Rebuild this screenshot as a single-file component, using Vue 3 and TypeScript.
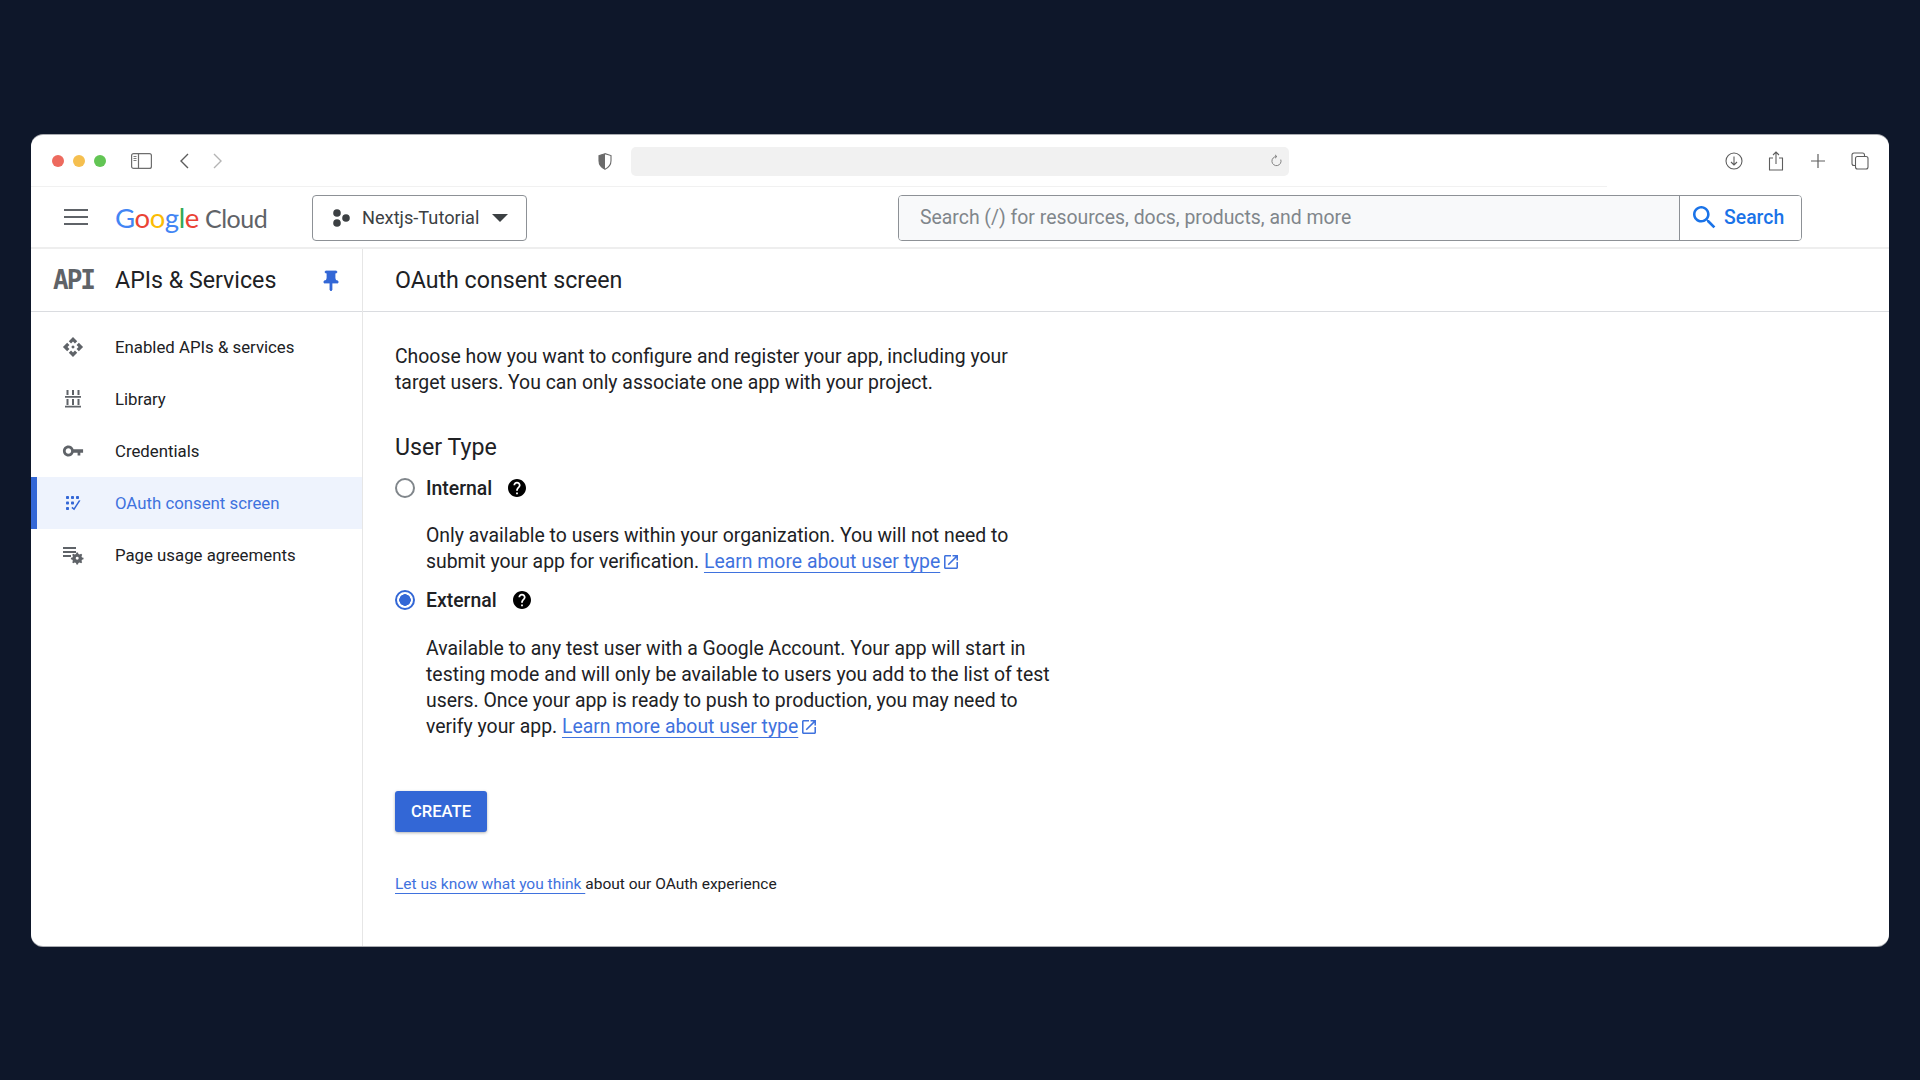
<script setup lang="ts">
const helpPath = "M12 2C6.48 2 2 6.48 2 12s4.48 10 10 10 10-4.48 10-10S17.52 2 12 2zm1 17h-2v-2h2v2zm2.07-7.75l-.9.92C13.45 12.9 13 13.5 13 15h-2v-.5c0-1.1.45-2.1 1.17-2.83l1.24-1.26c.37-.36.59-.86.59-1.41 0-1.1-.9-2-2-2s-2 .9-2 2H8c0-2.21 1.79-4 4-4s4 1.79 4 4c0 .88-.36 1.68-.93 2.25z";
const openPath = "M19 19H5V5h7V3H5c-1.11 0-2 .9-2 2v14c0 1.1.89 2 2 2h14c1.1 0 2-.9 2-2v-7h-2v7zM14 3v2h3.59l-9.83 9.83 1.41 1.41L19 6.41V10h2V3h-7z";
</script>

<template>
  <div class="page">
    <div class="window">
      <div class="browserbar">
        <div class="lights">
          <span class="light red"></span><span class="light yellow"></span><span class="light green"></span>
        </div>
        <svg class="sidebar-toggle" viewBox="0 0 21 16" width="21" height="16" fill="none" stroke="#6e6e6e" stroke-width="1.2">
          <rect x="0.6" y="0.6" width="19.8" height="14.8" rx="2" />
          <path d="M7.5 .6v14.8" />
          <path d="M2.5 3.5h3M2.5 5.5h3M2.5 7.5h3" stroke-width="0.9" />
        </svg>
        <svg class="back" viewBox="0 0 10 16" width="10" height="16" fill="none" stroke="#5c5c5c" stroke-width="1.4"><path d="M9 1L2 8l7 7" /></svg>
        <svg class="forward" viewBox="0 0 10 16" width="10" height="16" fill="none" stroke="#b4b4b4" stroke-width="1.4"><path d="M1 1l7 7-7 7" /></svg>
        <svg class="shield" viewBox="0 0 14 17" width="14" height="17">
          <path d="M7 .7L1 2.6v5.2c0 3.9 2.6 6.9 6 8.5 3.4-1.6 6-4.6 6-8.5V2.6z" fill="#fff" stroke="#6a6a6a" stroke-width="1.1" />
          <path d="M7 .7L1 2.6v5.2c0 3.9 2.6 6.9 6 8.5z" fill="#6a6a6a" />
        </svg>
        <div class="address">
          <svg viewBox="0 0 14 14" width="13" height="14" fill="none" stroke="#7a7a7a" stroke-width="1"><path d="M7 2.2a4.9 4.9 0 1 0 4.6 3.3" /><path d="M5.4 .4L7.4 2.2 5.4 4" /></svg>
        </div>
        <div class="browser-actions">
          <svg viewBox="0 0 18 18" width="18" height="18" fill="none" stroke="#5e5e5e" stroke-width="1.1"><circle cx="9" cy="9" r="8" /><path d="M9 4.5v8.5M6 10l3 3 3-3" /></svg>
          <svg viewBox="0 0 16 20" width="16" height="20" fill="none" stroke="#5e5e5e" stroke-width="1.1"><path d="M5 7H1.5v12h13V7H11M8 13V1M5 4l3-3 3 3" /></svg>
          <svg viewBox="0 0 16 16" width="16" height="16" fill="none" stroke="#5e5e5e" stroke-width="1.2"><path d="M8 1v14M1 8h14" /></svg>
          <svg viewBox="0 0 18 18" width="18" height="18" fill="none" stroke="#5e5e5e" stroke-width="1.1"><rect x="4.5" y="4.5" width="12.5" height="12.5" rx="2" /><path d="M13.5 4.5V3a2 2 0 0 0-2-2H3a2 2 0 0 0-2 2v8.500a2 2 0 0 0 2 2h1.500" /></svg>
        </div>
      </div>

      <header class="gc-header">
        <svg class="menu" viewBox="0 0 24 16" width="24" height="16" fill="#5f6368"><path d="M0 0h24v2H0zM0 7h24v2H0zM0 14h24v2H0z" /></svg>
        <div class="logo">
          <span class="g-blue">G</span><span class="g-red">o</span><span class="g-yellow">o</span><span class="g-blue">g</span><span class="g-green">l</span><span class="g-red">e</span><span class="cloud">Cloud</span>
        </div>
        <button class="project">
          <svg viewBox="0 0 18 18" width="18" height="18" fill="#3c4043"><circle cx="5" cy="4" r="3.800" /><circle cx="5" cy="14" r="3.800" /><circle cx="14" cy="9" r="3.800" /></svg>
          <span>Nextjs-Tutorial</span>
          <i class="caret"></i>
        </button>
        <div class="search">
          <div class="search-input">Search (/) for resources, docs, products, and more</div>
          <button class="search-btn">
            <svg viewBox="3 3 18 18" width="23" height="23" fill="#1a73e8"><path d="M15.5 14h-.79l-.28-.27C15.41 12.59 16 11.11 16 9.5 16 5.91 13.09 3 9.5 3S3 5.910 3 9.500 5.910 16 9.500 16c1.610 0 3.090-.59 4.230-1.570l.27.28v.79l5 4.990L20.490 19l-4.990-5zm-6 0C7.010 14 5 11.990 5 9.500S7.010 5 9.500 5 14 7.010 14 9.500 11.990 14 9.500 14z" /></svg>
            <span>Search</span>
          </button>
        </div>
      </header>

      <div class="content">
        <aside class="side">
          <div class="side-title">
            <span class="api-mark">API</span>
            <span class="side-name">APIs &amp; Services</span>
            <svg class="pin" viewBox="0 0 24 24" width="24" height="24" fill="#3367d6" stroke="#3367d6" stroke-width="0.8"><path d="M16 9V4h1c.55 0 1-.45 1-1s-.45-1-1-1H7c-.55 0-1 .45-1 1s.45 1 1 1h1v5c0 1.660-1.340 3-3 3v2h5.970v7l1 1 1-1v-7H19v-2c-1.660 0-3-1.340-3-3z" /></svg>
          </div>
          <nav class="nav">
            <a class="nav-item">
              <svg viewBox="0 0 24 24" width="22" height="22" fill="#5f6368"><path d="M14 12l-2 2-2-2 2-2 2 2zm-2-6l2.120 2.120 2.500-2.500L12 1 7.380 5.620l2.500 2.500L12 6zm-6 6l2.120-2.120-2.500-2.500L1 12l4.620 4.620 2.500-2.500L6 12zm12 0l-2.120 2.120 2.500 2.500L23 12l-4.620-4.620-2.500 2.500L18 12zm-6 6l-2.120-2.120-2.500 2.500L12 23l4.620-4.620-2.500-2.500L12 18z" /></svg>
              <span>Enabled APIs &amp; services</span>
            </a>
            <a class="nav-item">
              <svg viewBox="0 0 20 20" width="20" height="20" fill="#5f6368"><path d="M3.500 1h2v5h-2zM9 1h2v5H9zM14.500 1h2v5h-2zM3.500 10h2v6h-2zM9 10h2v6H9zM14.500 10h2v6h-2zM2 7h16v1.800H2zM2 16.700h16v1.800H2z" /></svg>
              <span>Library</span>
            </a>
            <a class="nav-item">
              <svg viewBox="0 0 24 24" width="22" height="22" fill="#5f6368"><path d="M12.650 10C11.830 7.670 9.610 6 7 6c-3.310 0-6 2.690-6 6s2.690 6 6 6c2.610 0 4.830-1.670 5.650-4H17v3h3v-3h3v-4H12.650zM7 15c-1.660 0-3-1.340-3-3s1.340-3 3-3 3 1.340 3 3-1.340 3-3 3z" /></svg>
              <span>Credentials</span>
            </a>
            <a class="nav-item active">
              <svg viewBox="0 0 16 16" width="16" height="16" fill="#3367d6"><rect x="1" y="1" width="3" height="3" rx=".8" /><rect x="6" y="1" width="3" height="3" rx=".8" /><rect x="11" y="1" width="3" height="3" rx=".8" /><rect x="1" y="6.500" width="3" height="3" rx=".8" /><rect x="6" y="6.500" width="3" height="3" rx=".8" /><rect x="1" y="12" width="3" height="3" rx=".8" /><path d="M15.500 5.500l-6.300 9.800-2.800-2.300 1-1.200 1.500 1.200 5-7.700z" /></svg>
              <span>OAuth consent screen</span>
            </a>
            <a class="nav-item">
              <svg viewBox="0 0 22 20" width="22" height="20" fill="#5f6368"><path d="M1 2h13v2H1zM1 6h13v2H1zM1 10h8v2H1z" /><path fill-rule="evenodd" d="M16 9l.4 1.500 1.300.5 1.400-.7 1.100 1.100-.7 1.400.5 1.300 1.500.4v1.600l-1.500.4-.5 1.300.7 1.400-1.100 1.100-1.400-.7-1.300.5-.4 1.400h-1.600l-.4-1.400-1.300-.5-1.400.7-1.100-1.100.7-1.400-.5-1.300-1.500-.4v-1.600l1.500-.4.5-1.300-.7-1.400 1.100-1.100 1.400.7 1.300-.5.4-1.500zm-.8 4.500a1.500 1.500 0 1 0 0 3 1.500 1.500 0 0 0 0-3z" transform="translate(0 -1) scale(1 .95)" /></svg>
              <span>Page usage agreements</span>
            </a>
          </nav>
        </aside>

        <main class="main">
          <div class="main-title">OAuth consent screen</div>
          <div class="main-body">
            <p class="intro">Choose how you want to configure and register your app, including your target users. You can only associate one app with your project.</p>
            <h2 class="section">User Type</h2>

            <div class="option">
              <span class="radio"></span>
              <span class="opt-label">Internal</span>
              <svg class="help" viewBox="2 2 20 20" width="18" height="18" fill="#000"><path :d="helpPath" /></svg>
            </div>
            <p class="opt-desc">Only available to users within your organization. You will not need to submit your app for verification. <a class="link">Learn more about user type</a><svg class="ext" viewBox="3 3 18 18" width="14" height="14" fill="#3f72de"><path :d="openPath" /></svg></p>

            <div class="option second">
              <span class="radio on"></span>
              <span class="opt-label">External</span>
              <svg class="help" viewBox="2 2 20 20" width="18" height="18" fill="#000"><path :d="helpPath" /></svg>
            </div>
            <p class="opt-desc last">Available to any test user with a Google Account. Your app will start in testing mode and will only be available to users you add to the list of test users. Once your app is ready to push to production, you may need to verify your app. <a class="link">Learn more about user type</a><svg class="ext" viewBox="3 3 18 18" width="14" height="14" fill="#3f72de"><path :d="openPath" /></svg></p>

            <button class="create">CREATE</button>
            <p class="feedback"><a class="link">Let us know what you think </a>about our OAuth experience</p>
          </div>
        </main>
      </div>
    </div>
  </div>
</template>

<style>
html, body { margin: 0; background: #0e172a; }
</style>

<style scoped>
.page {
  width: 1920px;
  height: 1080px;
  box-sizing: border-box;
  padding: 135px 31px 134px 31px;
  background: #0e172a;
  font-family: Roboto, "Liberation Sans", sans-serif;
  color: #202124;
  overflow: hidden;
}
.window {
  height: 811px;
  background: #fff;
  border-radius: 12px;
  display: flex;
  flex-direction: column;
  overflow: hidden;
  box-shadow: 0 -1px 0 #a9abb0, 0 1px 0 #a9abb0;
}
.browserbar {
  height: 52px;
  flex: none;
  display: flex;
  align-items: center;
  position: relative;
  padding-left: 21px;
}
.browserbar::after {
  content: "";
  position: absolute;
  left: 0;
  bottom: 0;
  width: 1576px;
  height: 1px;
  background: #f1f1f1;
}
.lights { display: flex; gap: 9px; }
.light { width: 12px; height: 12px; border-radius: 50%; }
.red { background: #ed6a5e; }
.yellow { background: #f5bf4f; }
.green { background: #62c554; }
.sidebar-toggle { margin-left: 25px; }
.back { margin-left: 27px; }
.forward { margin-left: 24px; }
.shield { margin-left: 375px; }
.address {
  width: 658px;
  height: 29px;
  margin-left: 19px;
  background: #f1f1f1;
  border-radius: 5px;
  display: flex;
  align-items: center;
  justify-content: flex-end;
  padding-right: 6px;
  box-sizing: border-box;
}
.browser-actions {
  margin-left: 436px;
  width: 144px;
  display: flex;
  align-items: center;
  justify-content: space-between;
}
.gc-header {
  height: 62px;
  flex: none;
  box-sizing: border-box;
  border-bottom: 2px solid #eeeeee;
  display: flex;
  align-items: center;
  padding-left: 33px;
  padding-top: 1px;
}
.menu { margin-bottom: 2px; }
.logo {
  margin-left: 27px;
  width: 197px;
  flex: none;
  font-family: Lato, Roboto, sans-serif;
  font-size: 27.5px;
  letter-spacing: -0.4px;
  white-space: nowrap;
}
.g-blue { color: #4285f4; }
.g-red { color: #ea4335; }
.g-yellow { color: #fbbc04; }
.g-green { color: #34a853; }
.cloud { color: #5f6368; margin-left: 6px; font-size: 25px; letter-spacing: -0.5px; }
.project {
  width: 215px;
  height: 46px;
  box-sizing: border-box;
  flex: none;
  border: 1px solid #8d9196;
  border-radius: 4px;
  background: #fff;
  display: flex;
  align-items: center;
  padding: 0 18px 0 19px;
  font: 400 18.2px Roboto, sans-serif;
  color: #3c4043;
}
.project span { margin-left: 12px; }
.caret {
  margin-left: auto;
  width: 0;
  height: 0;
  border-left: 8px solid transparent;
  border-right: 8px solid transparent;
  border-top: 8px solid #3c4043;
}
.search {
  margin-left: 371px;
  width: 904px;
  height: 46px;
  box-sizing: border-box;
  flex: none;
  border: 1px solid #8d9196;
  border-radius: 4px;
  display: flex;
  overflow: hidden;
}
.search-input {
  flex: 1;
  background: #f8f9fa;
  border-right: 1px solid #8d9196;
  display: flex;
  align-items: center;
  padding-left: 21px;
  font-size: 19.4px;
  color: #80868b;
}
.search-btn {
  width: 121px;
  border: 0;
  background: #fff;
  display: flex;
  align-items: center;
  padding: 0 0 0 13px;
  gap: 8px;
  font: 500 19.4px Roboto, sans-serif;
  color: #1a73e8;
}
.content { flex: 1; display: flex; min-height: 0; }
.side {
  width: 332px;
  flex: none;
  box-sizing: border-box;
  border-right: 1px solid #e6e6e6;
}
.side-title {
  height: 63px;
  box-sizing: border-box;
  border-bottom: 1px solid #dadce0;
  display: flex;
  align-items: center;
  padding-left: 22px;
}
.api-mark {
  font: 700 26px "DejaVu Sans Mono", monospace;
  color: #5f6368;
  width: 62px;
  letter-spacing: -2px;
}
.side-name { font-size: 23.2px; color: #202124; }
.pin { margin-left: auto; margin-right: 19px; margin-top: 2px; }
.nav { padding-top: 9px; }
.nav-item {
  height: 52px;
  display: flex;
  align-items: center;
  font-size: 16.8px;
  color: #202124;
  position: relative;
  padding-left: 84px;
}
.nav-item svg {
  position: absolute;
  left: 42px;
  top: 50%;
  transform: translate(-50%, -50%);
}
.nav-item.active { background: #eef3fd; color: #3f72de; }
.nav-item.active::before {
  content: "";
  position: absolute;
  left: 0;
  top: 0;
  bottom: 0;
  width: 6px;
  background: #3367d6;
}
.main { flex: 1; min-width: 0; }
.main-title {
  height: 63px;
  box-sizing: border-box;
  border-bottom: 1px solid #dadce0;
  display: flex;
  align-items: center;
  padding-left: 32px;
  font-size: 23.2px;
  color: #202124;
}
.main-body { padding: 32px 0 0 32px; width: 660px; }
.intro { margin: 0; width: 640px; font-size: 19.4px; line-height: 26px; }
.section { margin: 36px 0 0; font-size: 23.2px; font-weight: 400; line-height: 30px; }
.option { display: flex; align-items: center; height: 30px; margin-top: 11px; }
.option.second { margin-top: 10px; }
.radio {
  width: 20px;
  height: 20px;
  box-sizing: border-box;
  border: 2px solid #80868b;
  border-radius: 50%;
  flex: none;
}
.radio.on {
  border-color: #3367d6;
  background: radial-gradient(circle, #3367d6 0 5.500px, #fff 6px);
}
.opt-label { margin-left: 11px; font-size: 19.4px; font-weight: 500; }
.help { margin-left: 16px; }
.opt-desc { margin: 20px 0 0 31px; font-size: 19.4px; line-height: 26px; }
.opt-desc.last { margin-top: 21px; }
.link {
  color: #3f72de;
  text-decoration: underline;
  text-underline-offset: 4px;
  text-decoration-thickness: 1px;
}
.ext { margin-left: 4px; vertical-align: -1px; }
.create {
  display: block;
  margin-top: 51px;
  width: 92px;
  height: 41px;
  border: 0;
  border-radius: 3px;
  background: #3367d6;
  color: #fff;
  font: 500 16.6px Roboto, sans-serif;
  box-shadow: 0 1px 3px rgba(60, 64, 67, .4);
}
.feedback { margin: 41px 0 0; font-size: 15.5px; line-height: 22px; }
</style>
